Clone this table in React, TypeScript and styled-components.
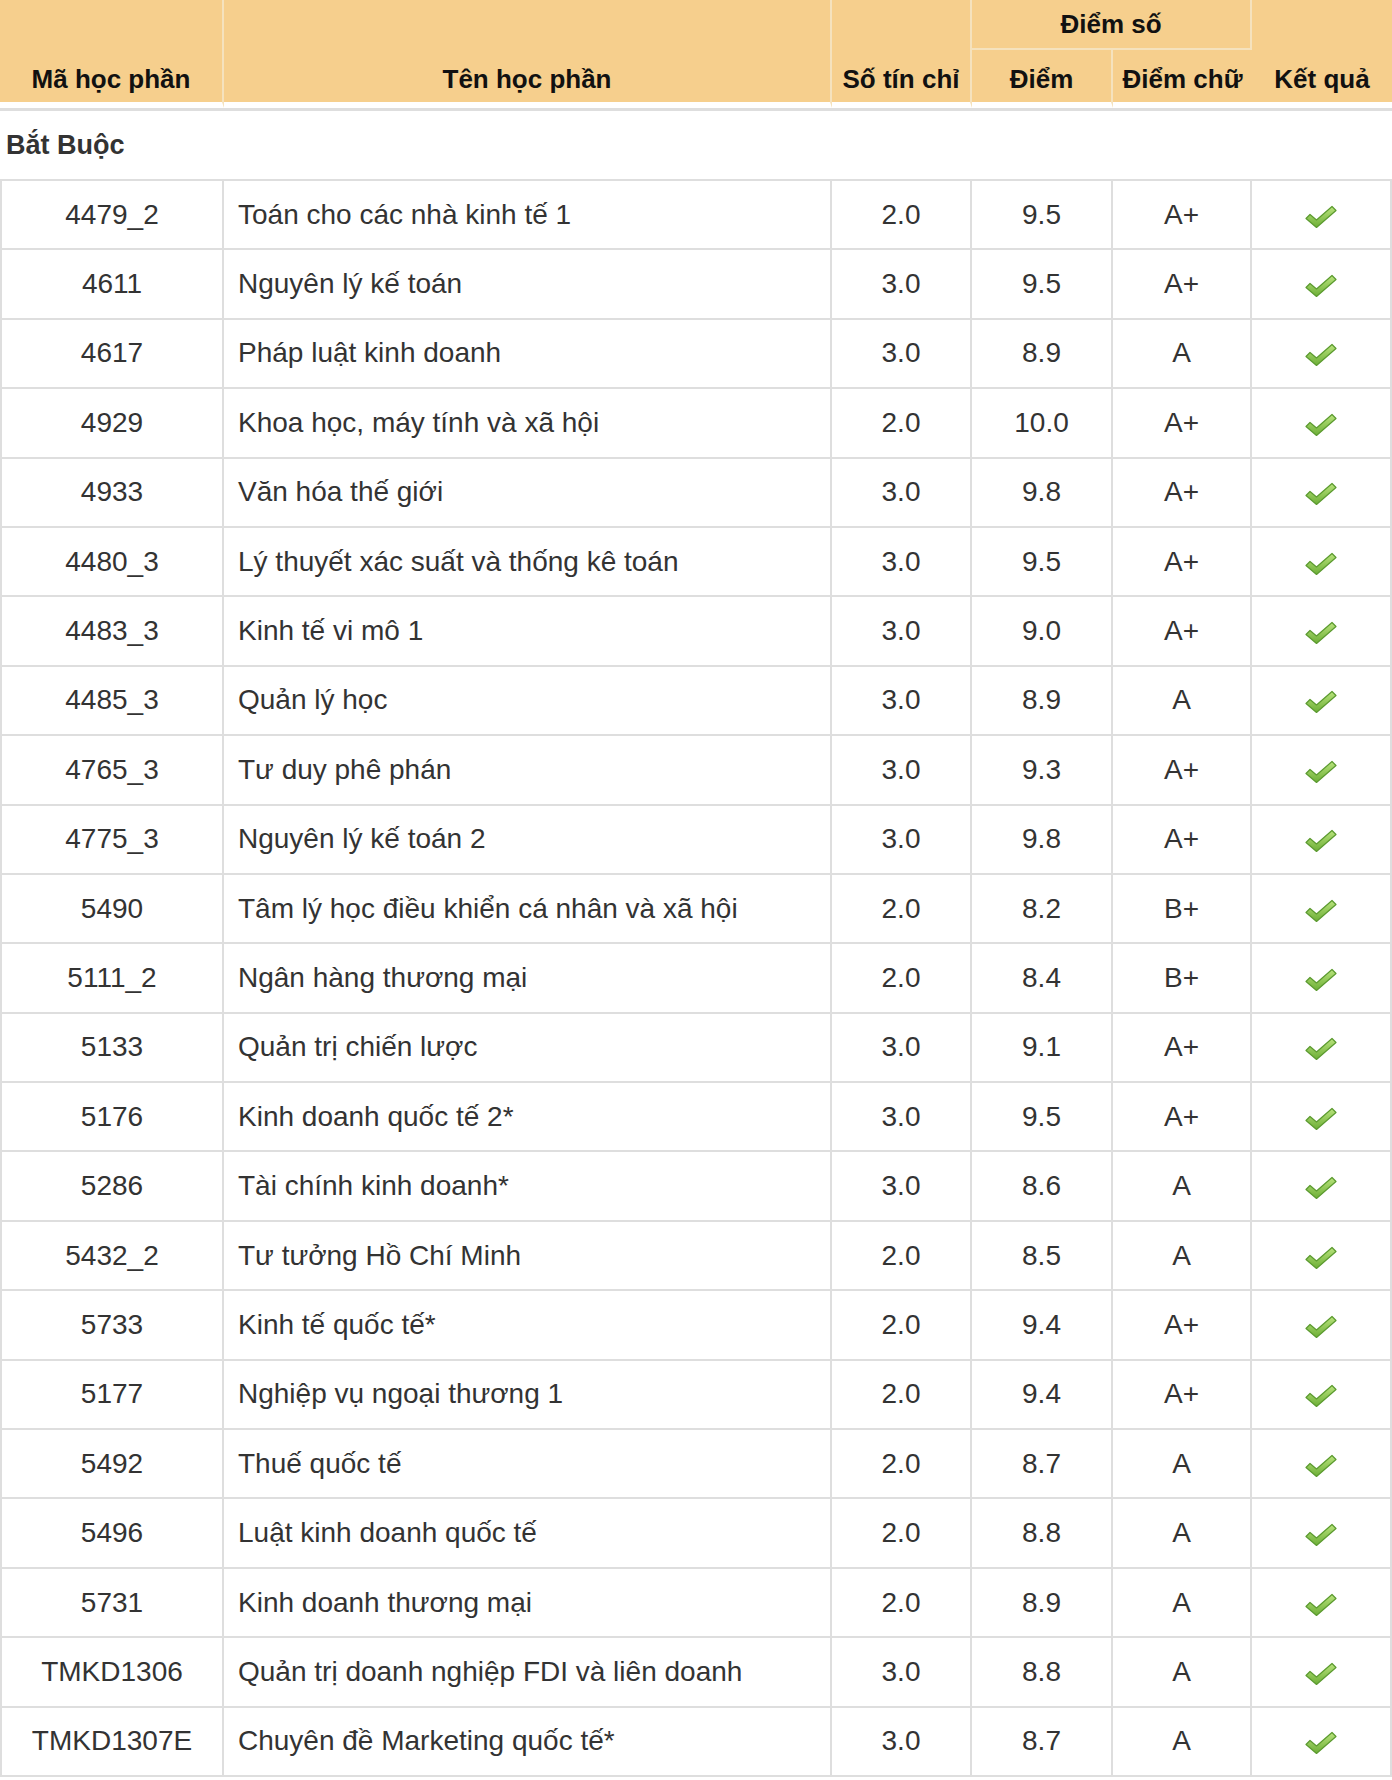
import styled, { createGlobalStyle } from "styled-components";

const GlobalStyle = createGlobalStyle`
  body {
    margin: 0;
    background: #fff;
    font-family: "Liberation Sans", Arial, sans-serif;
  }
`;

const Table = styled.table`
  width: 1392px;
  border-collapse: separate;
  border-spacing: 0;
  table-layout: fixed;
  color: #333;
`;

const Th = styled.th<{ $split?: boolean }>`
  background-color: #f6cf8d;
  color: #111;
  font-size: 26px;
  font-weight: 700;
  line-height: 30px;
  padding: 0 0 ${(p) => (p.$split ? "0" : "8px")} 0;
  vertical-align: ${(p) => (p.$split ? "middle" : "bottom")};
  text-align: center;
  border-right: 2px solid #f5e2bd;
  border-bottom: ${(p) => (p.$split ? "2px solid #f5e2bd" : "6px solid #fff")};
  height: ${(p) => (p.$split ? "48px" : "44px")};
  white-space: nowrap;
  &:last-child {
    border-right: none;
  }
`;

const GroupCell = styled.td`
  height: 68px;
  padding: 0 6px;
  font-size: 27px;
  font-weight: 700;
  color: #333;
  border-top: 3px solid #dedede;
  border-bottom: 2px solid #dedede;
`;

const Td = styled.td<{ $left?: boolean }>`
  height: 67.4px;
  padding: 0 ${(p) => (p.$left ? "14px" : "0")};
  font-size: 28px;
  line-height: 30px;
  text-align: ${(p) => (p.$left ? "left" : "center")};
  vertical-align: middle;
  border-right: 2px solid #dedede;
  border-bottom: 2px solid #dedede;
  white-space: nowrap;
  &:first-child {
    border-left: 2px solid #dedede;
  }
`;

const Check = () => (
  <svg width="32" height="24" viewBox="0 0 32 24" style={{ display: "block", margin: "4px auto 0" }}>
    <defs>
      <linearGradient id="ck" x1="0" y1="0" x2="0" y2="1">
        <stop offset="0" stopColor="#b9e37c" />
        <stop offset="1" stopColor="#6cae36" />
      </linearGradient>
    </defs>
    <polygon
      points="1,13.5 5,9.5 11.5,15 27,1.5 31,5.5 11.5,22.5"
      fill="url(#ck)"
      stroke="#5b9a2f"
      strokeWidth="1.2"
      strokeLinejoin="round"
    />
  </svg>
);

interface ICourse {
  code: string;
  name: string;
  credits: string;
  score: string;
  letter: string;
}

const courses: ICourse[] = [
  { code: "4479_2", name: "Toán cho các nhà kinh tế 1", credits: "2.0", score: "9.5", letter: "A+" },
  { code: "4611", name: "Nguyên lý kế toán", credits: "3.0", score: "9.5", letter: "A+" },
  { code: "4617", name: "Pháp luật kinh doanh", credits: "3.0", score: "8.9", letter: "A" },
  { code: "4929", name: "Khoa học, máy tính và xã hội", credits: "2.0", score: "10.0", letter: "A+" },
  { code: "4933", name: "Văn hóa thế giới", credits: "3.0", score: "9.8", letter: "A+" },
  { code: "4480_3", name: "Lý thuyết xác suất và thống kê toán", credits: "3.0", score: "9.5", letter: "A+" },
  { code: "4483_3", name: "Kinh tế vi mô 1", credits: "3.0", score: "9.0", letter: "A+" },
  { code: "4485_3", name: "Quản lý học", credits: "3.0", score: "8.9", letter: "A" },
  { code: "4765_3", name: "Tư duy phê phán", credits: "3.0", score: "9.3", letter: "A+" },
  { code: "4775_3", name: "Nguyên lý kế toán 2", credits: "3.0", score: "9.8", letter: "A+" },
  { code: "5490", name: "Tâm lý học điều khiển cá nhân và xã hội", credits: "2.0", score: "8.2", letter: "B+" },
  { code: "5111_2", name: "Ngân hàng thương mại", credits: "2.0", score: "8.4", letter: "B+" },
  { code: "5133", name: "Quản trị chiến lược", credits: "3.0", score: "9.1", letter: "A+" },
  { code: "5176", name: "Kinh doanh quốc tế 2*", credits: "3.0", score: "9.5", letter: "A+" },
  { code: "5286", name: "Tài chính kinh doanh*", credits: "3.0", score: "8.6", letter: "A" },
  { code: "5432_2", name: "Tư tưởng Hồ Chí Minh", credits: "2.0", score: "8.5", letter: "A" },
  { code: "5733", name: "Kinh tế quốc tế*", credits: "2.0", score: "9.4", letter: "A+" },
  { code: "5177", name: "Nghiệp vụ ngoại thương 1", credits: "2.0", score: "9.4", letter: "A+" },
  { code: "5492", name: "Thuế quốc tế", credits: "2.0", score: "8.7", letter: "A" },
  { code: "5496", name: "Luật kinh doanh quốc tế", credits: "2.0", score: "8.8", letter: "A" },
  { code: "5731", name: "Kinh doanh thương mại", credits: "2.0", score: "8.9", letter: "A" },
  { code: "TMKD1306", name: "Quản trị doanh nghiệp FDI và liên doanh", credits: "3.0", score: "8.8", letter: "A" },
  { code: "TMKD1307E", name: "Chuyên đề Marketing quốc tế*", credits: "3.0", score: "8.7", letter: "A" },
];

function App() {
  return (
    <>
      <GlobalStyle />
      <Table>
        <colgroup>
          <col style={{ width: 224 }} />
          <col style={{ width: 608 }} />
          <col style={{ width: 140 }} />
          <col style={{ width: 141 }} />
          <col style={{ width: 139 }} />
          <col style={{ width: 140 }} />
        </colgroup>
        <thead>
          <tr>
            <Th rowSpan={2}>Mã học phần</Th>
            <Th rowSpan={2}>Tên học phần</Th>
            <Th rowSpan={2}>Số tín chỉ</Th>
            <Th colSpan={2} $split>Điểm số</Th>
            <Th rowSpan={2}>Kết quả</Th>
          </tr>
          <tr>
            <Th>Điểm</Th>
            <Th>Điểm chữ</Th>
          </tr>
        </thead>
        <tbody>
          <tr>
            <GroupCell colSpan={6}>Bắt Buộc</GroupCell>
          </tr>
          {courses.map((c) => (
            <tr key={c.code}>
              <Td>{c.code}</Td>
              <Td $left>{c.name}</Td>
              <Td>{c.credits}</Td>
              <Td>{c.score}</Td>
              <Td>{c.letter}</Td>
              <Td>
                <Check />
              </Td>
            </tr>
          ))}
        </tbody>
      </Table>
    </>
  );
}

export default App;
